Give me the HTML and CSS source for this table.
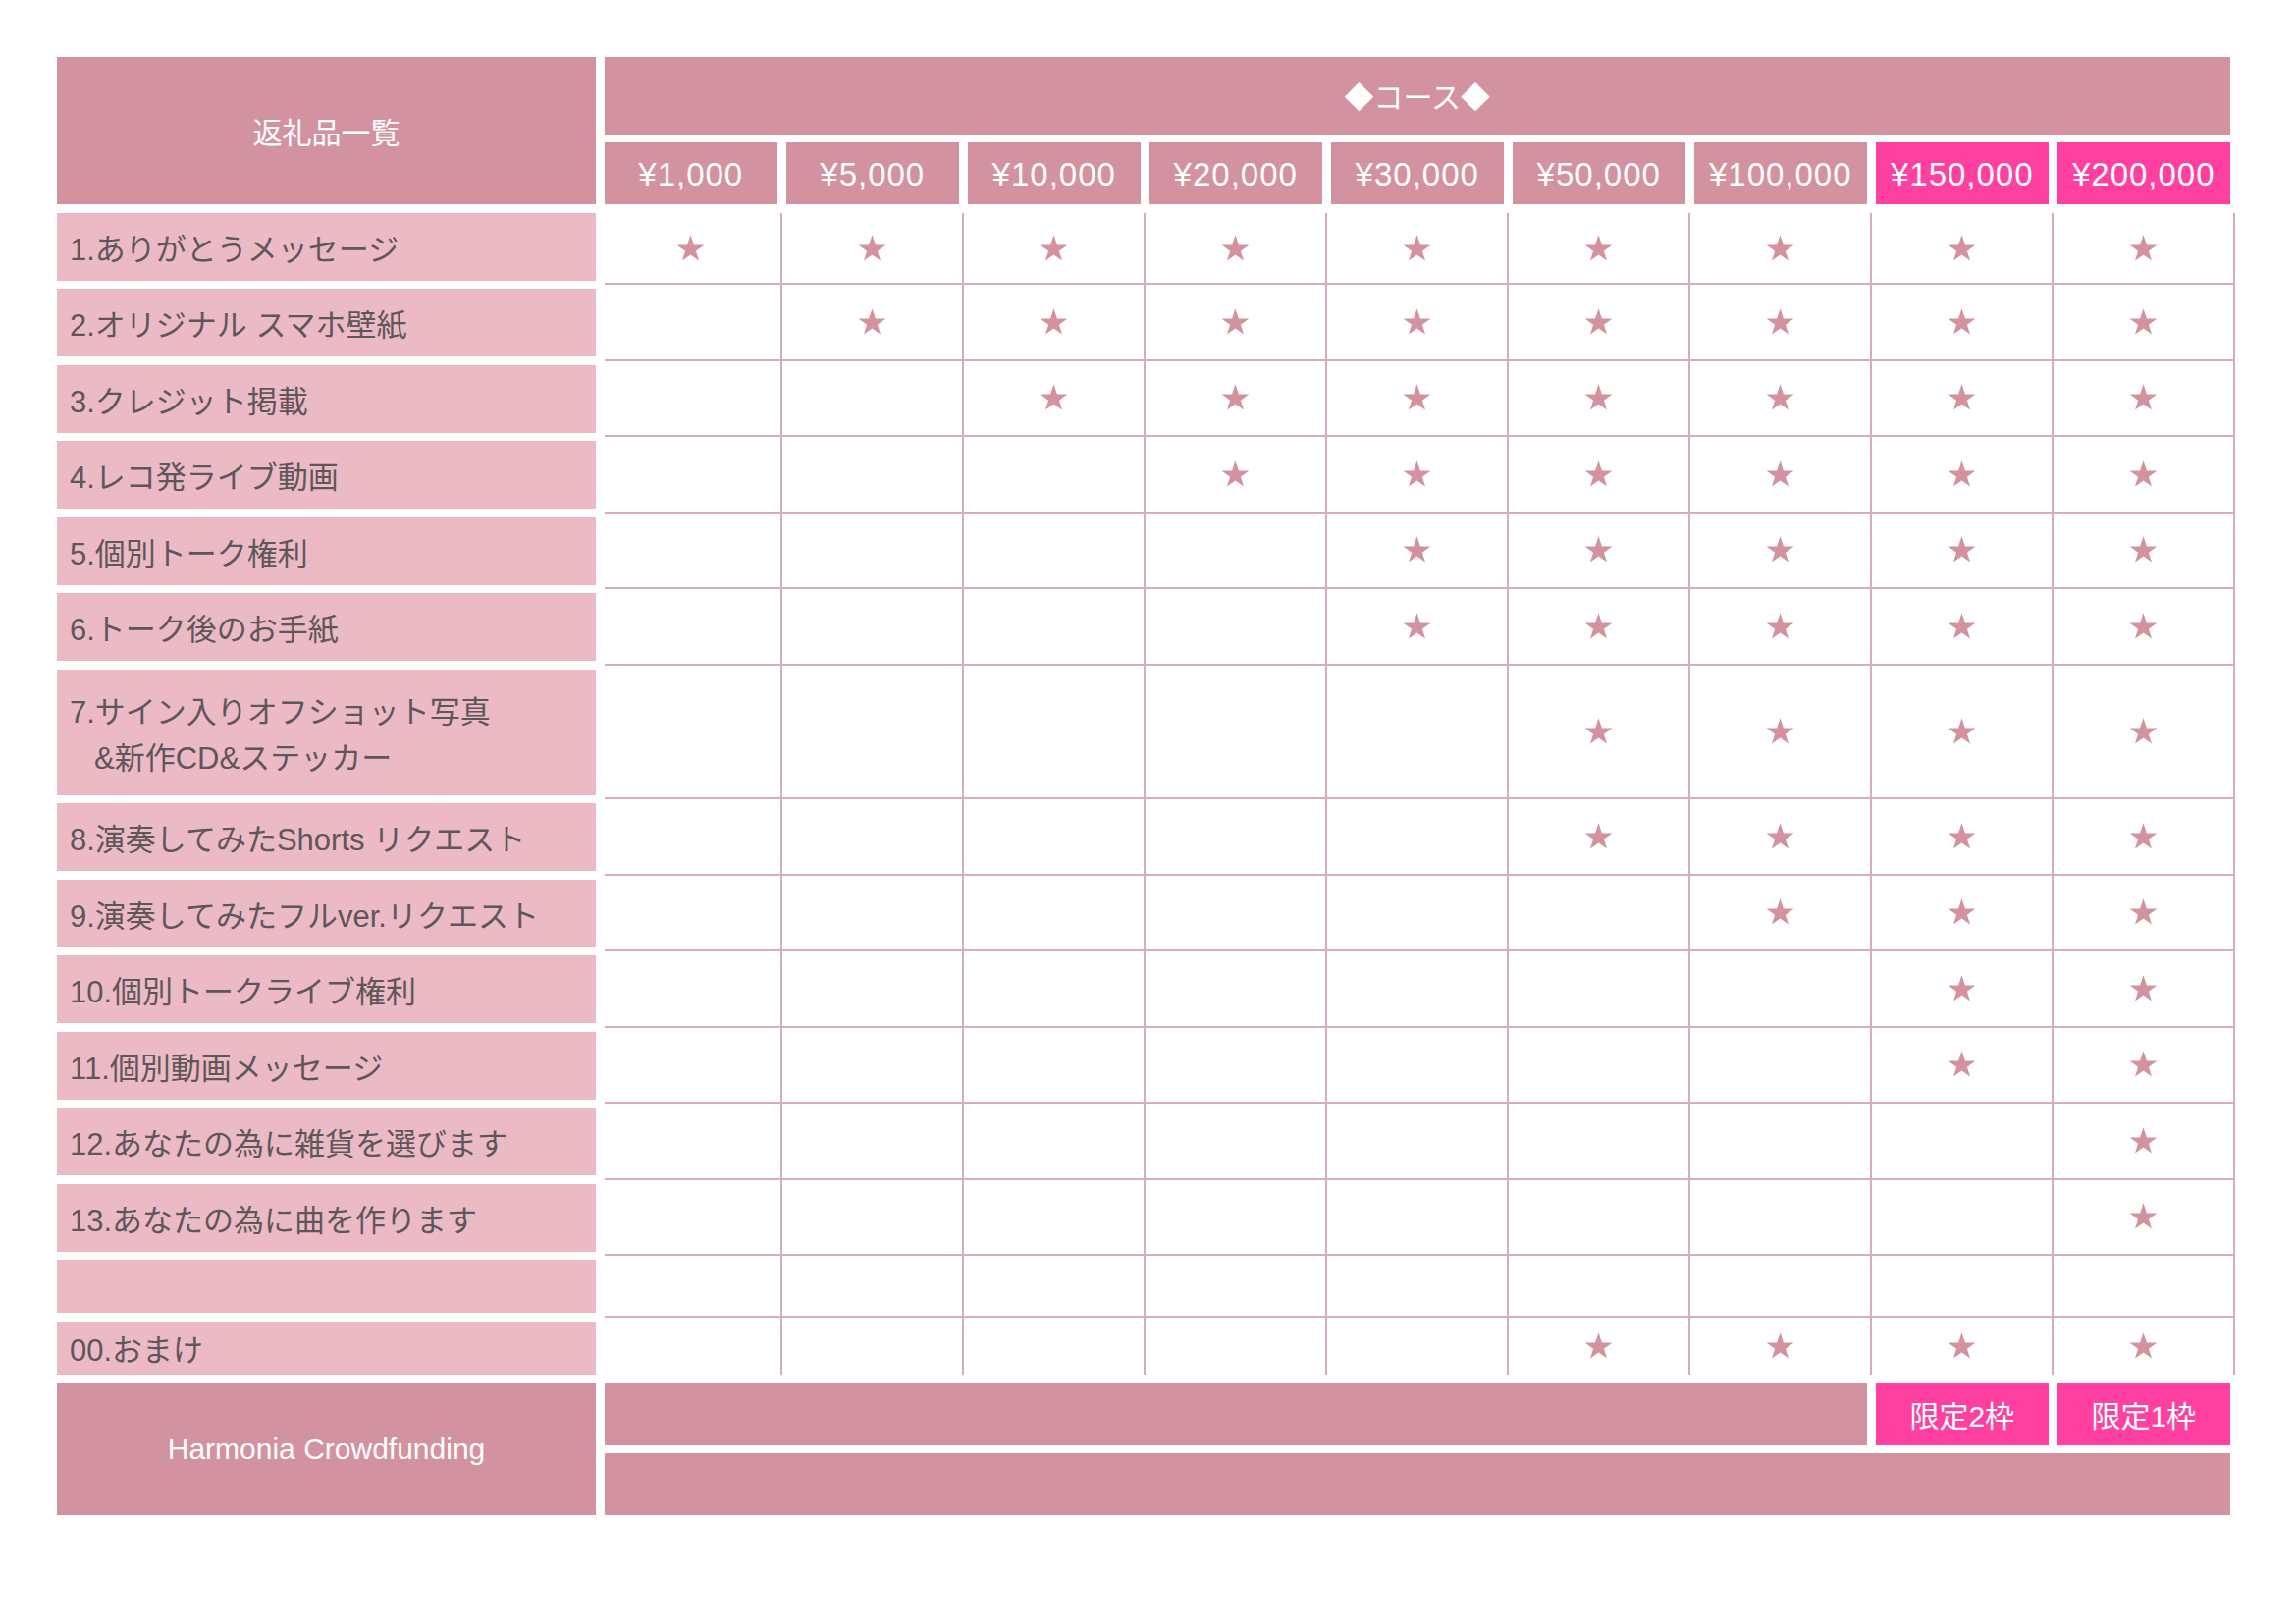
FILE: index.html
```html
<!DOCTYPE html>
<html lang="ja">
<head>
<meta charset="utf-8">
<title>返礼品一覧</title>
<link rel="stylesheet" href="styles.css">
</head>
<body>
<svg class="defs" width="0" height="0" aria-hidden="true">
  <symbol id="star" viewBox="0 0 100 95">
    <polygon points="50,0 61.8,35.1 98.1,35.1 68.8,56.8 79.4,91 50,70 20.6,91 31.2,56.8 1.9,35.1 38.2,35.1"/>
  </symbol>
</svg>
<div class="sheet">
  <div class="head">
    <div class="head-label">返礼品一覧</div>
    <div class="head-right">
      <div class="course">◆コース◆</div>
      <div class="prices">
        <div class="price">¥1,000</div>
        <div class="price">¥5,000</div>
        <div class="price">¥10,000</div>
        <div class="price">¥20,000</div>
        <div class="price">¥30,000</div>
        <div class="price">¥50,000</div>
        <div class="price">¥100,000</div>
        <div class="price hot">¥150,000</div>
        <div class="price hot">¥200,000</div>
      </div>
    </div>
  </div>

  <div class="body">
    <div class="row first">
      <div class="label">1.ありがとうメッセージ</div>
      <div class="data">
        <div class="cell"><svg class="star"><use href="#star"/></svg></div>
        <div class="cell"><svg class="star"><use href="#star"/></svg></div>
        <div class="cell"><svg class="star"><use href="#star"/></svg></div>
        <div class="cell"><svg class="star"><use href="#star"/></svg></div>
        <div class="cell"><svg class="star"><use href="#star"/></svg></div>
        <div class="cell"><svg class="star"><use href="#star"/></svg></div>
        <div class="cell"><svg class="star"><use href="#star"/></svg></div>
        <div class="cell"><svg class="star"><use href="#star"/></svg></div>
        <div class="cell"><svg class="star"><use href="#star"/></svg></div>
      </div>
    </div>
    <div class="row">
      <div class="label">2.オリジナル スマホ壁紙</div>
      <div class="data">
        <div class="cell"></div>
        <div class="cell"><svg class="star"><use href="#star"/></svg></div>
        <div class="cell"><svg class="star"><use href="#star"/></svg></div>
        <div class="cell"><svg class="star"><use href="#star"/></svg></div>
        <div class="cell"><svg class="star"><use href="#star"/></svg></div>
        <div class="cell"><svg class="star"><use href="#star"/></svg></div>
        <div class="cell"><svg class="star"><use href="#star"/></svg></div>
        <div class="cell"><svg class="star"><use href="#star"/></svg></div>
        <div class="cell"><svg class="star"><use href="#star"/></svg></div>
      </div>
    </div>
    <div class="row">
      <div class="label">3.クレジット掲載</div>
      <div class="data">
        <div class="cell"></div>
        <div class="cell"></div>
        <div class="cell"><svg class="star"><use href="#star"/></svg></div>
        <div class="cell"><svg class="star"><use href="#star"/></svg></div>
        <div class="cell"><svg class="star"><use href="#star"/></svg></div>
        <div class="cell"><svg class="star"><use href="#star"/></svg></div>
        <div class="cell"><svg class="star"><use href="#star"/></svg></div>
        <div class="cell"><svg class="star"><use href="#star"/></svg></div>
        <div class="cell"><svg class="star"><use href="#star"/></svg></div>
      </div>
    </div>
    <div class="row">
      <div class="label">4.レコ発ライブ動画</div>
      <div class="data">
        <div class="cell"></div>
        <div class="cell"></div>
        <div class="cell"></div>
        <div class="cell"><svg class="star"><use href="#star"/></svg></div>
        <div class="cell"><svg class="star"><use href="#star"/></svg></div>
        <div class="cell"><svg class="star"><use href="#star"/></svg></div>
        <div class="cell"><svg class="star"><use href="#star"/></svg></div>
        <div class="cell"><svg class="star"><use href="#star"/></svg></div>
        <div class="cell"><svg class="star"><use href="#star"/></svg></div>
      </div>
    </div>
    <div class="row">
      <div class="label">5.個別トーク権利</div>
      <div class="data">
        <div class="cell"></div>
        <div class="cell"></div>
        <div class="cell"></div>
        <div class="cell"></div>
        <div class="cell"><svg class="star"><use href="#star"/></svg></div>
        <div class="cell"><svg class="star"><use href="#star"/></svg></div>
        <div class="cell"><svg class="star"><use href="#star"/></svg></div>
        <div class="cell"><svg class="star"><use href="#star"/></svg></div>
        <div class="cell"><svg class="star"><use href="#star"/></svg></div>
      </div>
    </div>
    <div class="row">
      <div class="label">6.トーク後のお手紙</div>
      <div class="data">
        <div class="cell"></div>
        <div class="cell"></div>
        <div class="cell"></div>
        <div class="cell"></div>
        <div class="cell"><svg class="star"><use href="#star"/></svg></div>
        <div class="cell"><svg class="star"><use href="#star"/></svg></div>
        <div class="cell"><svg class="star"><use href="#star"/></svg></div>
        <div class="cell"><svg class="star"><use href="#star"/></svg></div>
        <div class="cell"><svg class="star"><use href="#star"/></svg></div>
      </div>
    </div>
    <div class="row tall">
      <div class="label"><span>7.サイン入りオフショット写真</span><span class="indent">&amp;新作CD&amp;ステッカー</span></div>
      <div class="data">
        <div class="cell"></div>
        <div class="cell"></div>
        <div class="cell"></div>
        <div class="cell"></div>
        <div class="cell"></div>
        <div class="cell"><svg class="star"><use href="#star"/></svg></div>
        <div class="cell"><svg class="star"><use href="#star"/></svg></div>
        <div class="cell"><svg class="star"><use href="#star"/></svg></div>
        <div class="cell"><svg class="star"><use href="#star"/></svg></div>
      </div>
    </div>
    <div class="row">
      <div class="label">8.演奏してみたShorts リクエスト</div>
      <div class="data">
        <div class="cell"></div>
        <div class="cell"></div>
        <div class="cell"></div>
        <div class="cell"></div>
        <div class="cell"></div>
        <div class="cell"><svg class="star"><use href="#star"/></svg></div>
        <div class="cell"><svg class="star"><use href="#star"/></svg></div>
        <div class="cell"><svg class="star"><use href="#star"/></svg></div>
        <div class="cell"><svg class="star"><use href="#star"/></svg></div>
      </div>
    </div>
    <div class="row">
      <div class="label">9.演奏してみたフルver.リクエスト</div>
      <div class="data">
        <div class="cell"></div>
        <div class="cell"></div>
        <div class="cell"></div>
        <div class="cell"></div>
        <div class="cell"></div>
        <div class="cell"></div>
        <div class="cell"><svg class="star"><use href="#star"/></svg></div>
        <div class="cell"><svg class="star"><use href="#star"/></svg></div>
        <div class="cell"><svg class="star"><use href="#star"/></svg></div>
      </div>
    </div>
    <div class="row">
      <div class="label">10.個別トークライブ権利</div>
      <div class="data">
        <div class="cell"></div>
        <div class="cell"></div>
        <div class="cell"></div>
        <div class="cell"></div>
        <div class="cell"></div>
        <div class="cell"></div>
        <div class="cell"></div>
        <div class="cell"><svg class="star"><use href="#star"/></svg></div>
        <div class="cell"><svg class="star"><use href="#star"/></svg></div>
      </div>
    </div>
    <div class="row">
      <div class="label">11.個別動画メッセージ</div>
      <div class="data">
        <div class="cell"></div>
        <div class="cell"></div>
        <div class="cell"></div>
        <div class="cell"></div>
        <div class="cell"></div>
        <div class="cell"></div>
        <div class="cell"></div>
        <div class="cell"><svg class="star"><use href="#star"/></svg></div>
        <div class="cell"><svg class="star"><use href="#star"/></svg></div>
      </div>
    </div>
    <div class="row">
      <div class="label">12.あなたの為に雑貨を選びます</div>
      <div class="data">
        <div class="cell"></div>
        <div class="cell"></div>
        <div class="cell"></div>
        <div class="cell"></div>
        <div class="cell"></div>
        <div class="cell"></div>
        <div class="cell"></div>
        <div class="cell"></div>
        <div class="cell"><svg class="star"><use href="#star"/></svg></div>
      </div>
    </div>
    <div class="row">
      <div class="label">13.あなたの為に曲を作ります</div>
      <div class="data">
        <div class="cell"></div>
        <div class="cell"></div>
        <div class="cell"></div>
        <div class="cell"></div>
        <div class="cell"></div>
        <div class="cell"></div>
        <div class="cell"></div>
        <div class="cell"></div>
        <div class="cell"><svg class="star"><use href="#star"/></svg></div>
      </div>
    </div>
    <div class="row short">
      <div class="label"></div>
      <div class="data">
        <div class="cell"></div>
        <div class="cell"></div>
        <div class="cell"></div>
        <div class="cell"></div>
        <div class="cell"></div>
        <div class="cell"></div>
        <div class="cell"></div>
        <div class="cell"></div>
        <div class="cell"></div>
      </div>
    </div>
    <div class="row short last">
      <div class="label">00.おまけ</div>
      <div class="data">
        <div class="cell"></div>
        <div class="cell"></div>
        <div class="cell"></div>
        <div class="cell"></div>
        <div class="cell"></div>
        <div class="cell"><svg class="star"><use href="#star"/></svg></div>
        <div class="cell"><svg class="star"><use href="#star"/></svg></div>
        <div class="cell"><svg class="star"><use href="#star"/></svg></div>
        <div class="cell"><svg class="star"><use href="#star"/></svg></div>
      </div>
    </div>
  </div>

  <div class="foot">
    <div class="foot-label">Harmonia Crowdfunding</div>
    <div class="foot-right">
      <div class="limits">
        <div class="merge"></div>
        <div class="limit">限定2枠</div>
        <div class="limit">限定1枠</div>
      </div>
      <div class="foot-bar"></div>
    </div>
  </div>
</div>
</body>
</html>
```

FILE: styles.css
```css
html, body {
  margin: 0;
  padding: 0;
  background: #ffffff;
}

body {
  font-family: "Liberation Sans", "Noto Sans CJK JP", sans-serif;
  color: #5e5759;
}

.defs {
  position: absolute;
  width: 0;
  height: 0;
  overflow: hidden;
}

.sheet {
  padding: 58px 0 0 58px;
  width: 2240px;
}

/* header */
.head {
  display: flex;
  gap: 8.5px;
}

.head-label {
  flex: none;
  width: 549px;
  height: 149.7px;
  background: #d3929f;
  color: #ffffff;
  font-size: 30px;
  display: flex;
  align-items: center;
  justify-content: center;
}

.head-right {
  flex: none;
  width: 1656.5px;
  display: flex;
  flex-direction: column;
  gap: 8.6px;
}

.course {
  height: 78.7px;
  background: #d3929f;
  color: #ffffff;
  font-size: 30px;
  display: flex;
  align-items: center;
  justify-content: center;
}

.prices {
  display: grid;
  grid-template-columns: repeat(9, 1fr);
  column-gap: 8.5px;
  height: 62.4px;
}

.price {
  background: #d3929f;
  color: #ffffff;
  font-size: 33px;
  letter-spacing: 1px;
  padding-top: 3px;
  display: flex;
  align-items: center;
  justify-content: center;
}

.hot {
  background: #ff40a0;
}

/* body rows */
.body {
  margin-top: 5px;
}

.row {
  display: flex;
  gap: 8.5px;
}

.label {
  flex: none;
  box-sizing: border-box;
  width: 549px;
  height: 69px;
  margin: 4.25px 0;
  padding-left: 13px;
  background: #ecbac5;
  color: #5e5759;
  font-size: 31px;
  display: flex;
  align-items: center;
  white-space: nowrap;
}

.row.tall .label {
  height: 128px;
  padding-top: 6px;
  flex-direction: column;
  align-items: flex-start;
  justify-content: center;
  line-height: 47px;
}

.indent {
  padding-left: 25px;
}

.row.short .label {
  height: 54px;
}

.row.last .label {
  margin-bottom: 0;
}

.data {
  flex: none;
  box-sizing: border-box;
  width: 1661.5px;
  display: flex;
  border-bottom: 2px solid #d8adb8;
}

.row.first .data {
  margin-top: 4.25px;
}

.row.last .data {
  border-bottom: none;
}

.cell {
  flex: none;
  box-sizing: border-box;
  width: 185px;
  border-right: 2px solid #d8adb8;
  display: flex;
  align-items: center;
  justify-content: center;
}

.cell:first-child {
  width: 181.5px;
  padding-right: 4px;
}

.star {
  width: 29px;
  height: 28px;
  fill: #d4929f;
}

/* footer */
.foot {
  display: flex;
  gap: 8.5px;
  margin-top: 9.3px;
}

.foot-label {
  flex: none;
  width: 549px;
  height: 134px;
  background: #d3929f;
  color: #ffffff;
  font-size: 30px;
  display: flex;
  align-items: center;
  justify-content: center;
}

.foot-right {
  flex: none;
  width: 1656.5px;
  display: flex;
  flex-direction: column;
  gap: 8.3px;
}

.limits {
  display: grid;
  grid-template-columns: repeat(9, 1fr);
  column-gap: 8.5px;
  height: 62.4px;
}

.merge {
  grid-column: span 7;
  background: #d3929f;
}

.limit {
  background: #ff40a0;
  color: #ffffff;
  font-size: 30px;
  display: flex;
  align-items: center;
  justify-content: center;
}

.foot-bar {
  height: 63.3px;
  background: #d3929f;
}
```
